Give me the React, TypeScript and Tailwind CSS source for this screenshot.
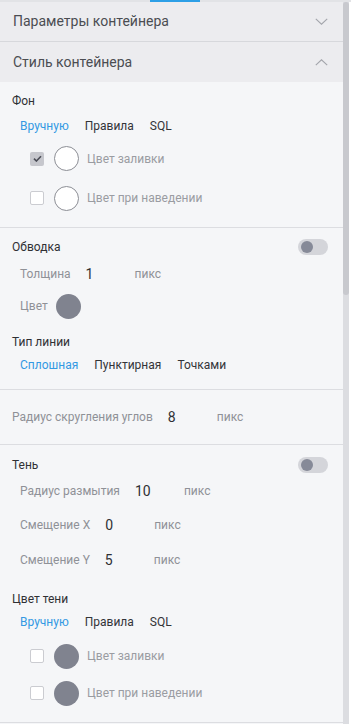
const font = { fontFamily: 'Roboto, "Noto Sans", sans-serif' }

function Chevron({ up }: { up?: boolean }) {
  return (
    <svg width="13" height="7" viewBox="0 0 13 7" fill="none" className={up ? 'rotate-180' : ''}>
      <path d="M0.8 0.8L6.5 6.2L12.2 0.8" stroke="#a3a5ab" strokeWidth="1.1" />
    </svg>
  )
}

function Toggle() {
  return (
    <div className="w-[30px] h-[16px] rounded-full bg-[#d4d5da] flex items-center px-[3px]">
      <div className="w-[12px] h-[12px] rounded-full bg-[#868a98]" />
    </div>
  )
}

function Checkbox({ checked }: { checked?: boolean }) {
  if (checked) {
    return (
      <div className="w-[14px] h-[14px] rounded-[2px] bg-[#c6c7cd] flex items-center justify-center">
        <svg width="9" height="7" viewBox="0 0 9 7" fill="none">
          <path d="M1 3.6L3.4 6L8 1.2" stroke="#4a4c56" strokeWidth="1.6" />
        </svg>
      </div>
    )
  }
  return <div className="w-[14px] h-[14px] rounded-[2px] bg-white border border-[#cbccd1]" />
}

function Tabs({ items }: { items: string[] }) {
  return (
    <div className="h-[24px] flex items-center gap-[16px] pl-[20px] text-[12px]">
      {items.map((t, i) => (
        <span key={t} className={i === 0 ? 'text-[#3399e3]' : 'text-[#333438]'}>
          {t}
        </span>
      ))}
    </div>
  )
}

function ColorRow({ checked, filled, label, h }: { checked?: boolean; filled?: boolean; label: string; h: string }) {
  return (
    <div className={`${h} flex items-center pl-[30px]`}>
      <Checkbox checked={checked} />
      <div
        className={
          'ml-[10px] w-[25px] h-[25px] rounded-full ' +
          (filled ? 'bg-[#80838f]' : 'bg-white border border-[#8c8e95]')
        }
      />
      <span className="ml-[8px] text-[12px] text-[#9a9ca2]">{label}</span>
    </div>
  )
}

function ValueRow({ label, value, h, pl = 'pl-[20px]' }: { label: string; value: string; h: string; pl?: string }) {
  return (
    <div className={`${h} flex items-center ${pl}`}>
      <span className="text-[12px] text-[#8f9197]">{label}</span>
      <span className="ml-[15px] w-[49px] text-[14px] text-[#2f3034]">{value}</span>
      <span className="text-[12px] text-[#8f9197]">пикс</span>
    </div>
  )
}

function Label({ children, cls }: { children: React.ReactNode; cls: string }) {
  return <div className={`${cls} flex items-center pl-[12px] text-[12px] text-[#2f3034]`}>{children}</div>
}

export default function App() {
  return (
    <div style={font} className="w-[351px] h-[724px] overflow-hidden bg-white">
      <div className="h-[2px] bg-[#e2e3e6] flex">
        <div className="ml-[150px] w-[50px] bg-[#2d9fe6]" />
      </div>
      <div className="flex h-[722px]">
        <div className="w-[343px] bg-[#f5f6f8] flex flex-col">
          <div className="h-[40px] bg-[#ececef] border-b border-[#d7d8dc] flex items-center justify-between pl-[13px] pr-[15px]">
            <span className="text-[14px] text-[#4b4d52]">Параметры контейнера</span>
            <Chevron />
          </div>
          <div className="h-[40px] bg-[#ececef] flex items-center justify-between pl-[13px] pr-[15px]">
            <span className="text-[14px] text-[#4b4d52]">Стиль контейнера</span>
            <Chevron up />
          </div>

          <div className="pt-[8px] pb-[10px] border-b border-[#dcdde1]">
            <Label cls="h-[22px]">Фон</Label>
            <div className="h-[2px]" />
            <Tabs items={['Вручную', 'Правила', 'SQL']} />
            <ColorRow checked label="Цвет заливки" h="h-[41px]" />
            <ColorRow label="Цвет при наведении" h="h-[38px]" />
          </div>

          <div className="pt-[9px] pb-[12px] border-b border-[#dcdde1]">
            <div className="h-[20px] flex items-center justify-between pl-[12px] pr-[15px]">
              <span className="text-[12px] text-[#2f3034]">Обводка</span>
              <Toggle />
            </div>
            <ValueRow label="Толщина" value="1" h="h-[34px]" />
            <div className="h-[30px] flex items-center pl-[20px]">
              <span className="text-[12px] text-[#8f9197]">Цвет</span>
              <div className="ml-[8px] w-[25px] h-[25px] rounded-full bg-[#80838f]" />
            </div>
            <div className="h-[10px]" />
            <Label cls="h-[22px]">Тип линии</Label>
            <div className="flex h-[24px] items-center pl-[20px] gap-[16px] text-[12px]">
              <span className="text-[#3399e3]">Сплошная</span>
              <span className="text-[#333438]">Пунктирная</span>
              <span className="text-[#333438]">Точками</span>
            </div>
          </div>

          <div className="border-b border-[#dcdde1]">
            <ValueRow label="Радиус скругления углов" value="8" h="h-[54px]" pl="pl-[12px]" />
          </div>

          <div className="pt-[10px] pb-[14px] border-b border-[#dcdde1]">
            <div className="h-[20px] flex items-center justify-between pl-[12px] pr-[15px]">
              <span className="text-[12px] text-[#2f3034]">Тень</span>
              <Toggle />
            </div>
            <ValueRow label="Радиус размытия" value="10" h="h-[32px]" />
            <ValueRow label="Смещение X" value="0" h="h-[36px]" />
            <ValueRow label="Смещение Y" value="5" h="h-[34px]" />
            <div className="h-[11px]" />
            <Label cls="h-[22px]">Цвет тени</Label>
            <Tabs items={['Вручную', 'Правила', 'SQL']} />
            <ColorRow filled label="Цвет заливки" h="h-[44px]" />
            <ColorRow filled label="Цвет при наведении" h="h-[30px]" />
          </div>
        </div>
        <div className="w-[8px] bg-white flex">
          <div className="w-[6px] bg-[#dcdde1]">
            <div className="h-[293px] rounded-[3px] bg-[#c8c9ce]" />
          </div>
        </div>
      </div>
    </div>
  )
}
